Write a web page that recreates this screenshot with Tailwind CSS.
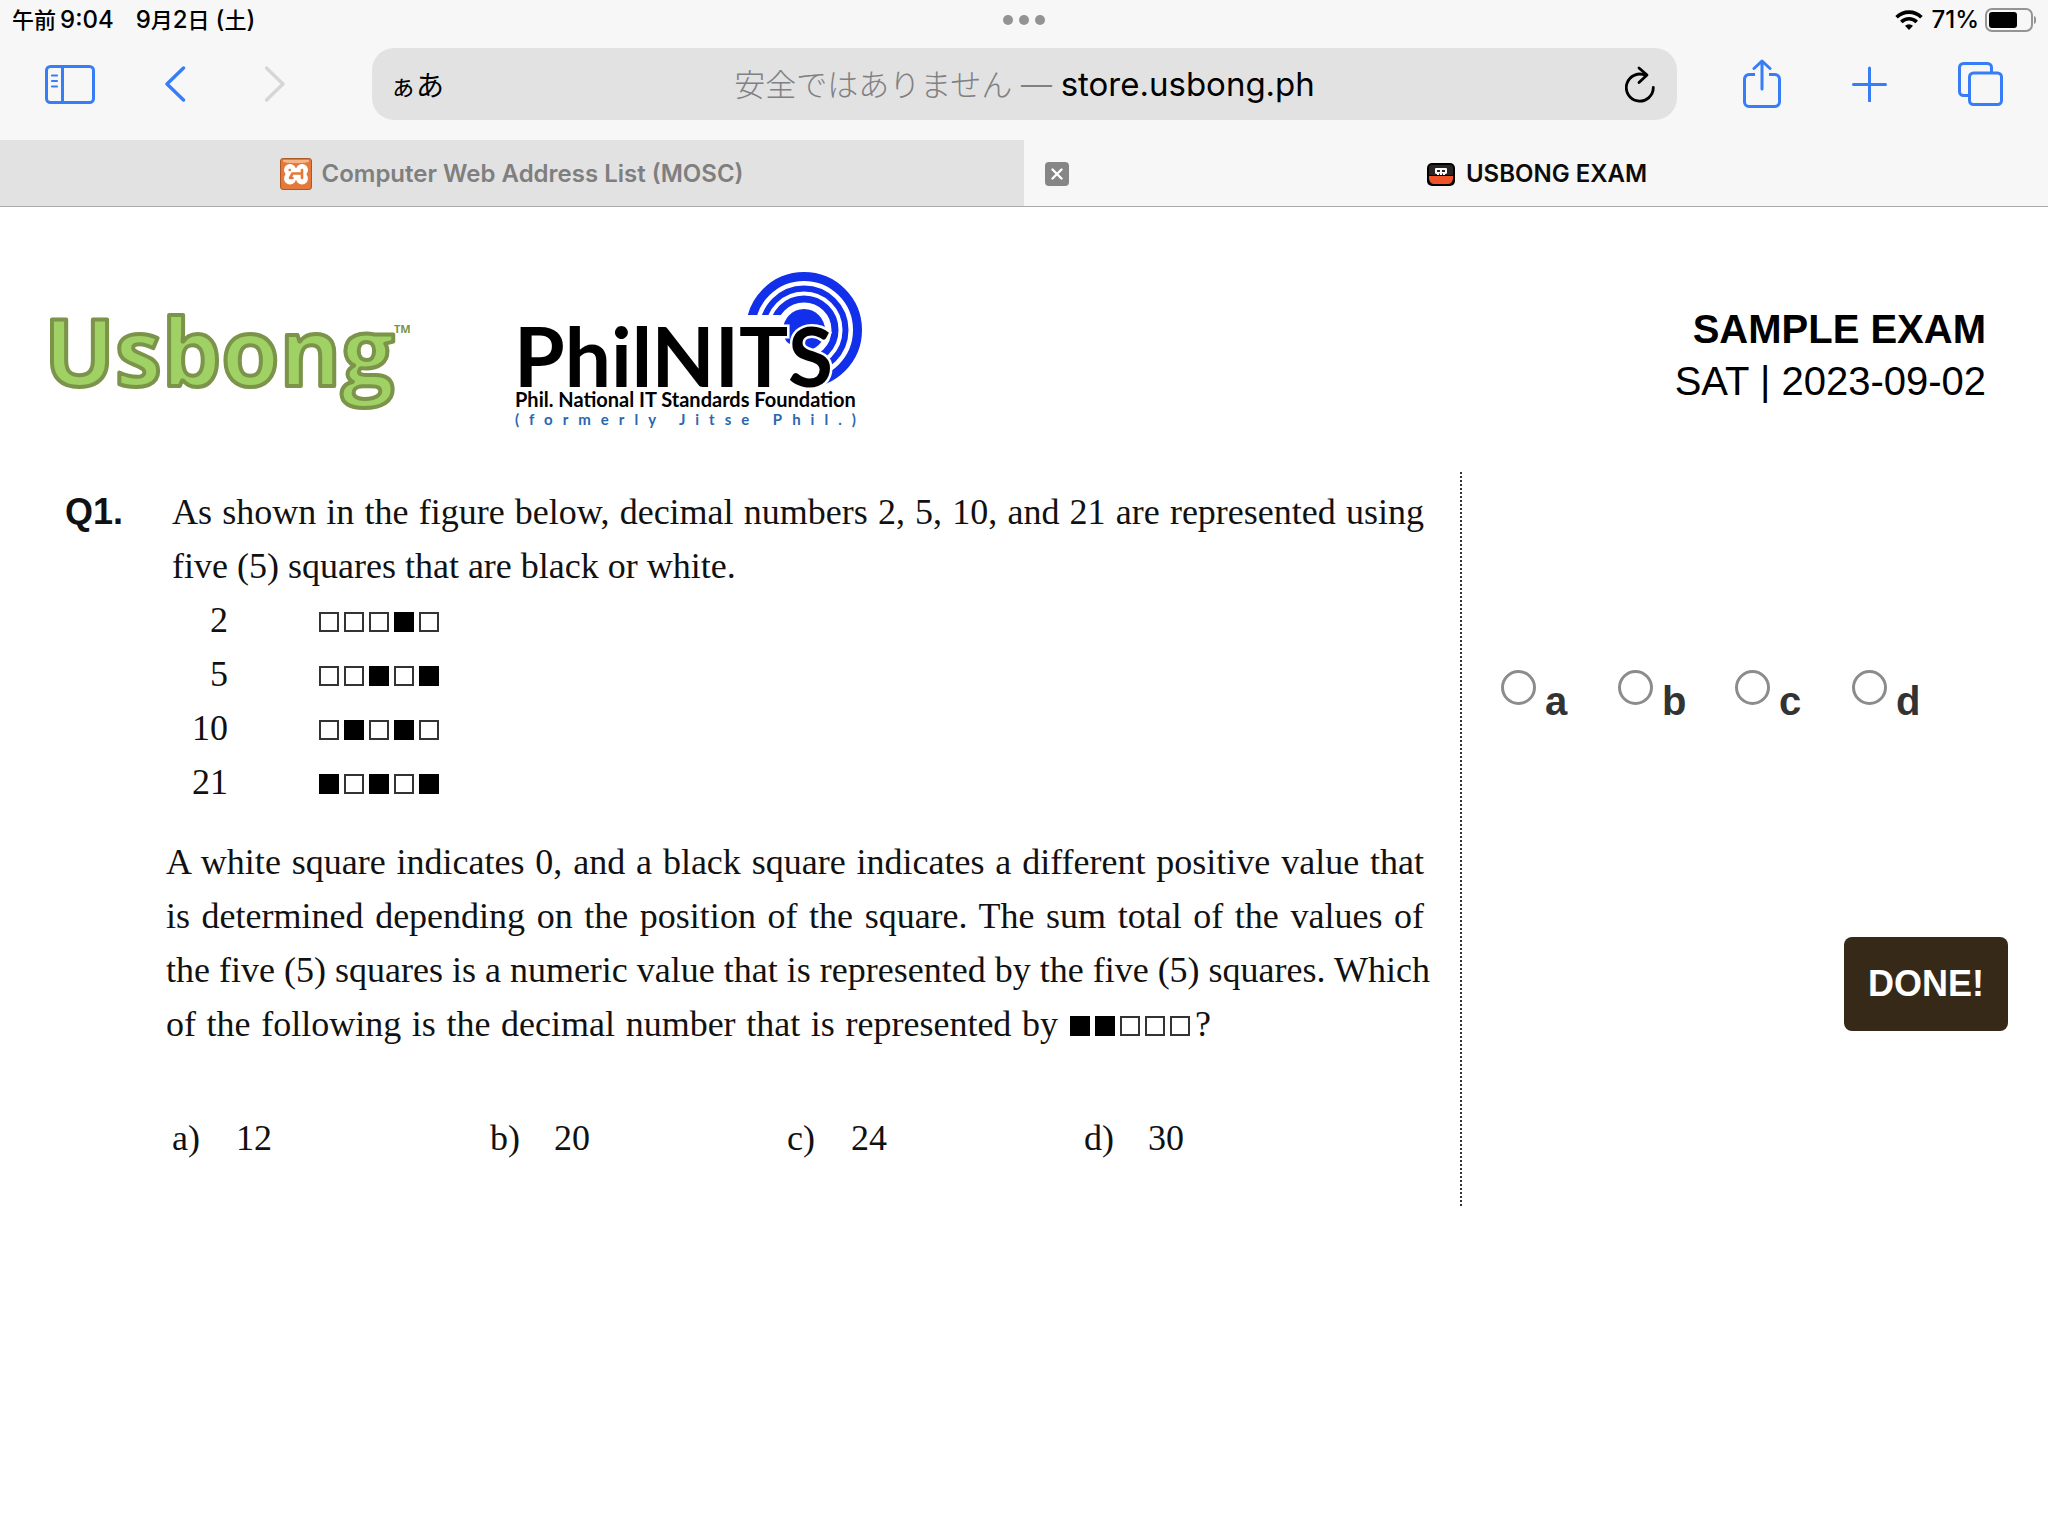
<!DOCTYPE html>
<html lang="ja">
<head>
<meta charset="utf-8">
<meta name="viewport" content="width=device-width, initial-scale=1">
<title>USBONG EXAM</title>
<script src="https://cdn.jsdelivr.net/npm/@tailwindcss/browser@4"></script>
</head>
<body class="min-h-screen bg-white text-black">

<header class="border-b border-[#a9a9a9] bg-[#f7f7f7] font-['Inter','Noto_Sans_CJK_JP',sans-serif]">
  <!-- Status bar -->
  <div class="grid h-10 grid-cols-[1fr_auto_1fr] items-center px-3 text-2xl font-medium leading-10">
    <div class="flex gap-[22px]">
      <span class="flex items-center gap-1"><span class="text-[22px]">午前</span>9:04</span>
      <span class="flex items-center">9<span class="text-[22px]">月</span>2<span class="text-[22px]">日</span><span class="ml-[6px]">(</span><span class="text-[22px]">土</span>)</span>
    </div>
    <div class="flex gap-[6px]">
      <span class="size-[10px] rounded-full bg-[#939393]"></span>
      <span class="size-[10px] rounded-full bg-[#939393]"></span>
      <span class="size-[10px] rounded-full bg-[#939393]"></span>
    </div>
    <div class="flex items-center justify-end">
      <svg class="mr-2" width="28" height="20" viewBox="0 0 28 20" fill="none" stroke="#000" stroke-width="3.6">
        <path d="M1.6 7.2a17.6 17.6 0 0 1 24.8 0"/><path d="M6.3 12a10.9 10.9 0 0 1 15.4 0"/><path d="M14 20l-4-4.2a5.8 5.8 0 0 1 8 0z" fill="#000" stroke="none"/>
      </svg>
      <span class="mr-[6px]">71%</span>
      <svg width="51" height="24" viewBox="0 0 51 24">
        <rect x="1" y="1" width="46" height="22" rx="6" fill="none" stroke="#949494" stroke-width="2"/>
        <rect x="4" y="4" width="28" height="16" rx="3" fill="#000"/>
        <path d="M49 8c3 1 3 7 0 8z" fill="#949494"/>
      </svg>
    </div>
  </div>

  <!-- Toolbar -->
  <div class="flex items-center px-[45px] pt-2 pb-5">
    <button type="button" aria-label="Sidebar" class="mr-[70px]">
      <svg class="block" width="50" height="40" viewBox="0 0 50 40" fill="none" stroke="#377df7" stroke-width="3" stroke-linecap="round">
        <rect x="1.500" y="2.500" width="47" height="36" rx="4"/><path d="M17.500 3v36"/><path d="M7 11.500h5M7 17h5M7 22.500h5" stroke-width="2.200"/>
      </svg>
    </button>
    <button type="button" aria-label="Back" class="mr-[70px]">
      <svg class="block" width="30" height="36" viewBox="0 0 30 36" fill="none" stroke="#377df7" stroke-width="3.400" stroke-linecap="round" stroke-linejoin="round"><path d="M18.500 2L2 18l16.500 16"/></svg>
    </button>
    <button type="button" aria-label="Forward" class="mr-[77px]">
      <svg class="block" width="30" height="36" viewBox="0 0 30 36" fill="none" stroke="#d6d6d6" stroke-width="3.400" stroke-linecap="round" stroke-linejoin="round"><path d="M1.500 2L18 18 1.500 34"/></svg>
    </button>
    <div class="grid h-[72px] flex-1 grid-cols-[1fr_auto_1fr] items-center rounded-[22px] bg-[#e2e2e2] px-[18px]">
      <button type="button" aria-label="Page settings" class="justify-self-start text-left font-['Noto_Sans_CJK_JP',sans-serif] text-[28px] leading-10"><span class="text-[26px]">ぁ</span>あ</button>
      <button type="button" class="text-[33px] leading-10"><span class="text-[31px] font-light text-[#808084]">安全ではありません — </span>store.usbong.ph</button>
      <button type="button" aria-label="Reload" class="justify-self-end pr-1">
        <svg class="block" width="30" height="37" viewBox="0 0 30 37" fill="none" stroke="#000" stroke-width="2.800" stroke-linecap="round" stroke-linejoin="round"><path d="M28.300 21.500A13.500 13.500 0 1 1 21 9.600"/><path d="M14 2l8 7-8 7.500"/></svg>
      </button>
    </div>
    <div class="ml-[66px] flex items-center gap-[71px]">
      <button type="button" aria-label="Share">
        <svg class="block" width="38" height="50" viewBox="0 0 38 50" fill="none" stroke="#377df7" stroke-width="3" stroke-linecap="round" stroke-linejoin="round"><path d="M12 15.500H6a4.500 4.500 0 0 0-4.500 4.500v23A4.500 4.500 0 0 0 6 47.500h26a4.500 4.500 0 0 0 4.500-4.500V20a4.500 4.500 0 0 0-4.500-4.500h-6" stroke-linecap="butt"/><path d="M19 30V2M11 9.500L19 2l8 7.500"/></svg>
      </button>
      <button type="button" aria-label="New tab">
        <svg class="block" width="35" height="36" viewBox="0 0 35 36" fill="none" stroke="#377df7" stroke-width="3" stroke-linecap="round"><path d="M17.500 2v33M1.500 18.500h32"/></svg>
      </button>
      <button type="button" aria-label="Show tabs">
        <svg class="block" width="45" height="44" viewBox="0 0 45 44" fill="none" stroke="#377df7" stroke-width="3"><rect x="11.500" y="11" width="32" height="31.500" rx="4"/><path d="M33.500 11V5.500a4 4 0 0 0-4-4h-24a4 4 0 0 0-4 4v24a4 4 0 0 0 4 4h6"/></svg>
      </button>
    </div>
  </div>

  <!-- Tabs -->
  <nav class="grid h-[66px] grid-cols-2 text-2xl font-semibold">
    <a href="#" class="flex items-center justify-center gap-[9px] bg-[#e2e2e2] pt-[2px] text-[#7f7f7f]">
      <svg width="32" height="32" viewBox="0 0 32 32">
        <rect x=".5" y=".5" width="31" height="31" rx="2.500" fill="#e5793a" stroke="#a95a27"/>
        <path d="M3 2h26v1.500q-2 1.500-13 1.500T3 3.500z" fill="#f4b58b"/>
        <g fill="#fff"><circle cx="10" cy="12" r="6"/><circle cx="22" cy="12" r="6"/><circle cx="10" cy="20.500" r="6"/><circle cx="22" cy="20.500" r="6"/><path d="M10 10h12v12H10z"/></g>
        <path d="M13.500 5h5L16 9.500zM13.500 27.500h5L16 23z" fill="#e5793a"/>
        <g fill="none" stroke="#e5793a" stroke-width="2.600" stroke-linecap="round" stroke-linejoin="round"><path d="M9.700 12h.1M12.500 15.500h9.500v-3.500M12.500 15.500l-2.500 4.500h2.500M22 15.500v4.500"/></g>
      </svg>
      <span>Computer Web Address List (MOSC)</span>
    </a>
    <div class="flex items-center pt-[2px] pl-[21px] pr-[43px]">
      <button type="button" aria-label="Close tab" class="flex size-6 items-center justify-center rounded-[4px] bg-[#868686]">
        <svg width="12" height="12" viewBox="0 0 12 12" stroke="#fff" stroke-width="2.400" stroke-linecap="round"><path d="M1.500 1.500l9 9M10.500 1.500l-9 9"/></svg>
      </button>
      <a href="#" class="flex flex-1 items-center justify-center gap-[11px] text-[#0c0c0c]">
        <svg width="28" height="23" viewBox="0 0 28 23">
          <rect width="28" height="23" rx="5" fill="#000"/><path d="M2 12V5q0-3 3-3h18q3 0 3 3v7z" fill="#2b2422"/><path d="M2 13h24v3q-1 5-5 5H7q-4 0-5-5z" fill="#f05328"/>
          <path d="M8 6q0-1 1-1h10q1 0 1 1v4q0 1-2 1v1h-8v-1q-2 0-2-1z" fill="#fff"/><path d="M10 7h3v2h-3zM15 7h3v2h-3zM12 10.500h1v1.500h-1zM15 10.500h1v1.500h-1z" fill="#2b2422"/>
        </svg>
        <span>USBONG EXAM</span>
      </a>
    </div>
  </nav>
</header>

<main>
  <div class="flex items-center px-10 pt-[63px] pb-[42px]">
    <svg class="mr-[94px] shrink-0" width="380" height="136" viewBox="40 282 380 136" role="img" aria-label="Usbong">
      <text x="44" y="386" class="font-['Open_Sans',sans-serif] text-[94px] font-bold" fill="#9fd165" stroke="#7b9449" stroke-width="4" stroke-linejoin="round">Usbong</text>
      <text x="394" y="333" class="font-['Open_Sans',sans-serif] text-[11px] font-bold" fill="#7b9449">TM</text>
    </svg>
    <svg class="shrink-0" width="360" height="160" viewBox="514 270 360 160" role="img" aria-label="PhilNITS">
      <clipPath id="rings"><path d="M740 260h130v140h-48l-2-10 6-20-42-30v-25h-44z"/></clipPath>
      <g clip-path="url(#rings)" fill="none" stroke="#1230ea">
        <circle cx="804" cy="330" r="53.500" stroke-width="9"/><circle cx="804" cy="330" r="41.500" stroke-width="6"/><circle cx="804" cy="330" r="31" stroke-width="7"/><circle cx="804" cy="330" r="21" fill="#1230ea" stroke="none"/>
      </g>
      <text x="514" y="387" class="font-['Lato',sans-serif] text-[82px] font-bold" stroke="#fff" stroke-width="5" paint-order="stroke">PhilNITS</text>
      <text x="515" y="407" class="font-['Lato',sans-serif] text-[20px] font-bold">Phil. National IT Standards Foundation</text>
      <text x="515" y="425" class="font-['Lato',sans-serif] text-[15px] font-bold tracking-[10px]" fill="#2a66b0">(formerly Jitse Phil.)</text>
    </svg>
    <div class="ml-auto pt-[10px] pr-[22px] text-right font-['Liberation_Sans',sans-serif] text-[40px] leading-[52px]">
      <h1 class="font-bold">SAMPLE EXAM</h1>
      <p>SAT | 2023-09-02</p>
    </div>
  </div>

  <form class="flex">
    <section class="min-w-0 flex-1 pt-[13px] pr-[36px] pb-[41px] pl-[65px] font-['Liberation_Serif',serif] text-4xl leading-[54px] text-[#111]">
      <div class="flex">
        <h2 class="w-[107px] shrink-0 font-['Liberation_Sans',sans-serif] font-bold">Q1.</h2>
        <p class="flex-1 text-justify">As shown in the figure below, decimal numbers 2, 5, 10, and 21 are represented using five (5) squares that are black or white.</p>
      </div>
      <table class="text-right">
        <tbody>
          <tr><td class="w-[163px]">2</td><td class="pt-1 pl-[91px]"><span class="flex gap-[5px]" role="img" aria-label="00010"><i class="size-5 border-2 border-[#333]"></i><i class="size-5 border-2 border-[#333]"></i><i class="size-5 border-2 border-[#333]"></i><i class="size-5 bg-black"></i><i class="size-5 border-2 border-[#333]"></i></span></td></tr>
          <tr><td>5</td><td class="pt-1 pl-[91px]"><span class="flex gap-[5px]" role="img" aria-label="00101"><i class="size-5 border-2 border-[#333]"></i><i class="size-5 border-2 border-[#333]"></i><i class="size-5 bg-black"></i><i class="size-5 border-2 border-[#333]"></i><i class="size-5 bg-black"></i></span></td></tr>
          <tr><td>10</td><td class="pt-1 pl-[91px]"><span class="flex gap-[5px]" role="img" aria-label="01010"><i class="size-5 border-2 border-[#333]"></i><i class="size-5 bg-black"></i><i class="size-5 border-2 border-[#333]"></i><i class="size-5 bg-black"></i><i class="size-5 border-2 border-[#333]"></i></span></td></tr>
          <tr><td>21</td><td class="pt-1 pl-[91px]"><span class="flex gap-[5px]" role="img" aria-label="10101"><i class="size-5 bg-black"></i><i class="size-5 border-2 border-[#333]"></i><i class="size-5 bg-black"></i><i class="size-5 border-2 border-[#333]"></i><i class="size-5 bg-black"></i></span></td></tr>
        </tbody>
      </table>
      <div class="mt-[26px] pl-[101px]">
        <p class="text-justify [text-align-last:justify]">A white square indicates 0, and a black square indicates a different positive value that is determined depending on the position of the square. The sum total of the values of</p>
        <p class="whitespace-nowrap">the five (5) squares is a numeric value that is represented by the five (5) squares. Which</p>
        <p class="flex items-baseline gap-3"><span class="w-[892px] [text-align-last:justify]">of the following is the decimal number that is represented by</span> <span class="flex items-baseline gap-[5px]" role="img" aria-label="11000"><i class="size-5 bg-black"></i><i class="size-5 bg-black"></i><i class="size-5 border-2 border-[#333]"></i><i class="size-5 border-2 border-[#333]"></i><i class="size-5 border-2 border-[#333]"></i><span>?</span></span></p>
      </div>
      <ul class="mt-[60px] flex pl-[107px]">
        <li class="flex w-[318px]"><span class="w-16">a)</span>12</li>
        <li class="flex w-[297px]"><span class="w-16">b)</span>20</li>
        <li class="flex w-[297px]"><span class="w-16">c)</span>24</li>
        <li class="flex"><span class="w-16">d)</span>30</li>
      </ul>
    </section>

    <aside class="w-[588px] shrink-0 border-l-2 border-dotted border-[#333] pt-[198px] pr-10 pl-[39px] font-['Liberation_Sans',sans-serif] font-bold">
      <div class="flex text-[40px] leading-[62px] text-[#333]">
        <label class="flex w-[117px] items-start gap-[9px]"><input type="radio" name="answer" value="a" class="size-[35px] appearance-none rounded-full border-3 border-[#8c8c8c] checked:border-[10px]">a</label>
        <label class="flex w-[117px] items-start gap-[9px]"><input type="radio" name="answer" value="b" class="size-[35px] appearance-none rounded-full border-3 border-[#8c8c8c] checked:border-[10px]">b</label>
        <label class="flex w-[117px] items-start gap-[9px]"><input type="radio" name="answer" value="c" class="size-[35px] appearance-none rounded-full border-3 border-[#8c8c8c] checked:border-[10px]">c</label>
        <label class="flex w-[117px] items-start gap-[9px]"><input type="radio" name="answer" value="d" class="size-[35px] appearance-none rounded-full border-3 border-[#8c8c8c] checked:border-[10px]">d</label>
      </div>
      <button type="button" class="mt-[205px] ml-auto block rounded-lg bg-[#362918] px-6 text-4xl leading-[94px] text-white">DONE!</button>
    </aside>
  </form>
</main>
</body>
</html>
